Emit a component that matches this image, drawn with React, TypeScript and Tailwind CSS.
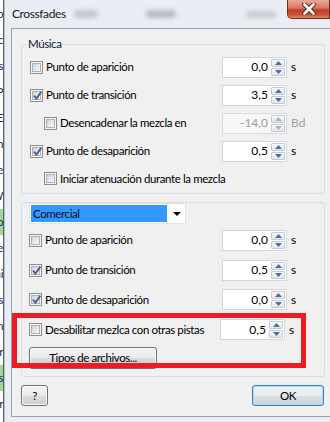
import React from "react";

function CheckBox({ checked }: { checked?: boolean }) {
  return (
    <span className="relative w-[13px] h-[13px] shrink-0 border border-[#8e8f8f] bg-[#f5f5f5] p-[1px] flex">
      <span className="flex-1 border border-[#aeb2b7] bg-[linear-gradient(135deg,#cfd1d3_0%,#e6e7e8_50%,#f8f8f8_100%)]" />
      {checked && (
        <svg className="absolute left-[1px] top-[0px]" width="11" height="11" viewBox="0 0 11 11">
          <path d="M2 5.6 L4.4 8.6 L9.4 1.6" fill="none" stroke="#4d5f95" strokeWidth="1.9" strokeLinejoin="miter" />
        </svg>
      )}
    </span>
  );
}

function SpinBtn({ up, disabled }: { up?: boolean; disabled?: boolean }) {
  return (
    <span className="flex-1 flex items-center justify-center border border-[#c4cbd4] rounded-[1px] bg-[linear-gradient(to_bottom,#f8f9fb,#e2e6eb)]">
      <svg width="7" height="4" viewBox="0 0 7 4">
        <path d={up ? "M0 4 L3.5 0 L7 4Z" : "M0 0 L3.5 4 L7 0Z"} fill={disabled ? "#a7b2c4" : "#4e6da3"} />
      </svg>
    </span>
  );
}

function Spin({ value, disabled }: { value: string; disabled?: boolean }) {
  return (
    <div
      className={
        disabled
          ? "w-[65px] h-[21px] shrink-0 border border-[#dadcdf] bg-[#f7f7f7] text-[#9b9b9b] flex"
          : "w-[65px] h-[21px] shrink-0 border border-[#d3d7dd] bg-white text-black flex"
      }
    >
      <span className="flex-1 flex items-center justify-end pr-[3px] text-[12px] tracking-[0px]">{value}</span>
      <div className="w-[15px] flex flex-col gap-[1px] py-[1px] pr-[1px]">
        <SpinBtn up disabled={disabled} />
        <SpinBtn disabled={disabled} />
      </div>
    </div>
  );
}

function Row({
  label,
  checked,
  indent,
  value,
  unit = "s",
  disabled,
  h = "h-[28px]",
  unitW = "w-[37px]",
}: {
  label: string;
  checked?: boolean;
  indent?: boolean;
  value?: string;
  unit?: string;
  disabled?: boolean;
  h?: string;
  unitW?: string;
}) {
  return (
    <div className={`${h} flex items-center`}>
      <div className={indent ? "flex items-center gap-[3px] pl-[14px]" : "flex items-center gap-[3px]"}>
        <CheckBox checked={checked} />
        <span className="whitespace-nowrap">{label}</span>
      </div>
      <div className="flex-1" />
      {value !== undefined && (
        <>
          <Spin value={value} disabled={disabled} />
          <span className={`${unitW} shrink-0 pl-[4px] text-[12px] tracking-[0px] ${disabled ? "text-[#a0a0a0]" : "text-black"}`}>{unit}</span>
        </>
      )}
    </div>
  );
}

const bgLetters: { t: string; green?: boolean }[] = [
  { t: "p" }, { t: "c" }, { t: "s" }, { t: "P" }, { t: "E" }, { t: "n" }, { t: "e" }, { t: "W" },
  { t: "o", green: true }, { t: "e" }, { t: "ni" }, { t: "s" }, { t: "m" }, { t: "r" }, { t: "s", green: true }, { t: "r" },
];

const btnBg =
  "bg-[linear-gradient(to_bottom,#f2f2f2_0%,#ebebeb_50%,#dddddd_51%,#cfcfcf_100%)]";

export default function App() {
  return (
    <div className="relative w-[330px] h-[422px] overflow-hidden flex bg-white font-['Lato','Segoe_UI',sans-serif] text-[11.5px] tracking-[-0.4px] leading-none text-black">
      {/* background window strip */}
      <div className="w-[3px] shrink-0 overflow-hidden bg-white">
        <div className="w-[12px] -ml-[9px] flex flex-col pt-[1px] text-[#1d2a5a]">
          {bgLetters.map((l, i) => (
            <div
              key={i}
              className={
                l.green
                  ? "h-[26px] flex items-center justify-end bg-[#9ed99a]"
                  : "h-[26px] flex items-center justify-end"
              }
            >
              {l.t}
            </div>
          ))}
        </div>
      </div>

      {/* window */}
      <div className="flex-1 min-w-0 flex flex-col border-l border-[#5d6167] bg-[#e9eef4] pl-[7px] shadow-[inset_1px_0_0_#b9c0c8]">
        {/* title bar */}
        <div className="h-[28px] shrink-0 flex items-center">
          <span className="pl-[1px] text-[12px] text-[#1a1a1a] -mt-[1px]">Crossfades</span>
          <span className="ml-[8px] w-[24px] h-[8px] rounded-full bg-[#c3c7cd] blur-[2px]" />
          <span className="ml-[48px] w-[30px] h-[8px] rounded-full bg-[#b7bcc3] blur-[2px]" />
          <span className="ml-[70px] w-[30px] h-[7px] rounded-full bg-[#c9ccd1] blur-[2px]" />
          <div className="ml-auto self-start w-[43px] h-[19px] rounded-bl-[5px] border border-t-0 border-[#6e2b20] bg-[linear-gradient(to_bottom,#e8aa9c_0%,#d77560_45%,#c23d21_55%,#d0583c_85%,#e08a6c_100%)] flex items-center justify-center">
            <svg width="14" height="12" viewBox="0 0 14 12">
              <path d="M2.5 1.5 L11.5 10.5 M11.5 1.5 L2.5 10.5" stroke="#4a2118" strokeWidth="4.6" strokeLinecap="round" />
              <path d="M2.5 1.5 L11.5 10.5 M11.5 1.5 L2.5 10.5" stroke="#ffffff" strokeWidth="2.8" strokeLinecap="round" />
            </svg>
          </div>
        </div>

        {/* client area */}
        <div className="w-[330px] h-[389px] shrink-0 border border-[#9aa3ad] bg-[#f0f0f0] pl-[9px] pt-[15px] flex flex-col">
          {/* group 1 */}
          <div className="relative w-[304px] h-[150px] shrink-0 border border-[#d5dfe5] rounded-[3px] pt-[8px] pl-[8px] flex flex-col">
            <span className="absolute -top-[8px] left-[5px] h-[14px] px-[1px] flex items-center bg-[#f0f0f0] text-[#0c1733]">
              Música
            </span>
            <Row label="Punto de aparición" value="0,0" />
            <Row label="Punto de transición" checked value="3,5" />
            <Row label="Desencadenar la mezcla en" indent value="-14,0" unit="Bd" disabled />
            <Row label="Punto de desaparición" checked value="0,5" />
            <Row label="Iniciar atenuación durante la mezcla" indent h="h-[27px]" />
          </div>

          {/* group 2 */}
          <div className="w-[304px] h-[175px] shrink-0 mt-[8px] border border-[#d5dfe5] rounded-[3px] pl-[7px] flex flex-col">
            <div className="w-[157px] h-[21px] shrink-0 border border-[#e1e4e8] bg-white p-[1px] flex">
              <span className="w-[136px] h-[17px] bg-[#3399ff] pl-[2px] flex items-center text-[#0a0f2a]">Comercial</span>
              <span className="flex-1 flex items-center justify-center pl-[2px]">
                <svg width="8" height="4" viewBox="0 0 8 4">
                  <path d="M0 0 L4 4 L8 0Z" fill="#000" />
                </svg>
              </span>
            </div>
            <div className="mt-[1px] flex flex-col">
              <Row label="Punto de aparición" value="0,0" h="h-[30px]" />
              <Row label="Punto de transición" checked value="0,5" h="h-[30px]" />
              <Row label="Punto de desaparición" checked value="0,0" h="h-[29px]" />
              <Row label="Desabilitar mezlca con otras pistas" value="0,5" h="h-[31px]" unitW="w-[39px]" />
            </div>
            <button
              className={`mt-[2px] w-[128px] h-[22px] shrink-0 rounded-[3px] border border-[#707070] ${btnBg} shadow-[inset_0_0_0_1px_#fbfbfb] flex items-center justify-center`}
            >
              Tipos de archivos...
            </button>
          </div>

          {/* buttons */}
          <div className="mt-[8px] w-[303px] h-[21px] shrink-0 flex justify-between">
            <button
              className={`w-[27px] h-[21px] rounded-[3px] border border-[#707070] ${btnBg} shadow-[inset_0_0_0_1px_#fbfbfb] flex items-center justify-center`}
            >
              ?
            </button>
            <button className="w-[72px] h-[21px] rounded-[3px] border border-[#3c7fb1] bg-[linear-gradient(to_bottom,#f0f3f5_0%,#e8ecef_50%,#dadfe3_51%,#ced4d9_100%)] shadow-[inset_0_0_0_1px_#a8def7] flex items-center justify-center">
              OK
            </button>
          </div>
        </div>
        <div className="flex-1" />
      </div>

      {/* red annotation box */}
      <div className="absolute left-[12px] top-[313px] w-[294px] h-[55px] border-[5px] border-[#ed1c24]" />
    </div>
  );
}
